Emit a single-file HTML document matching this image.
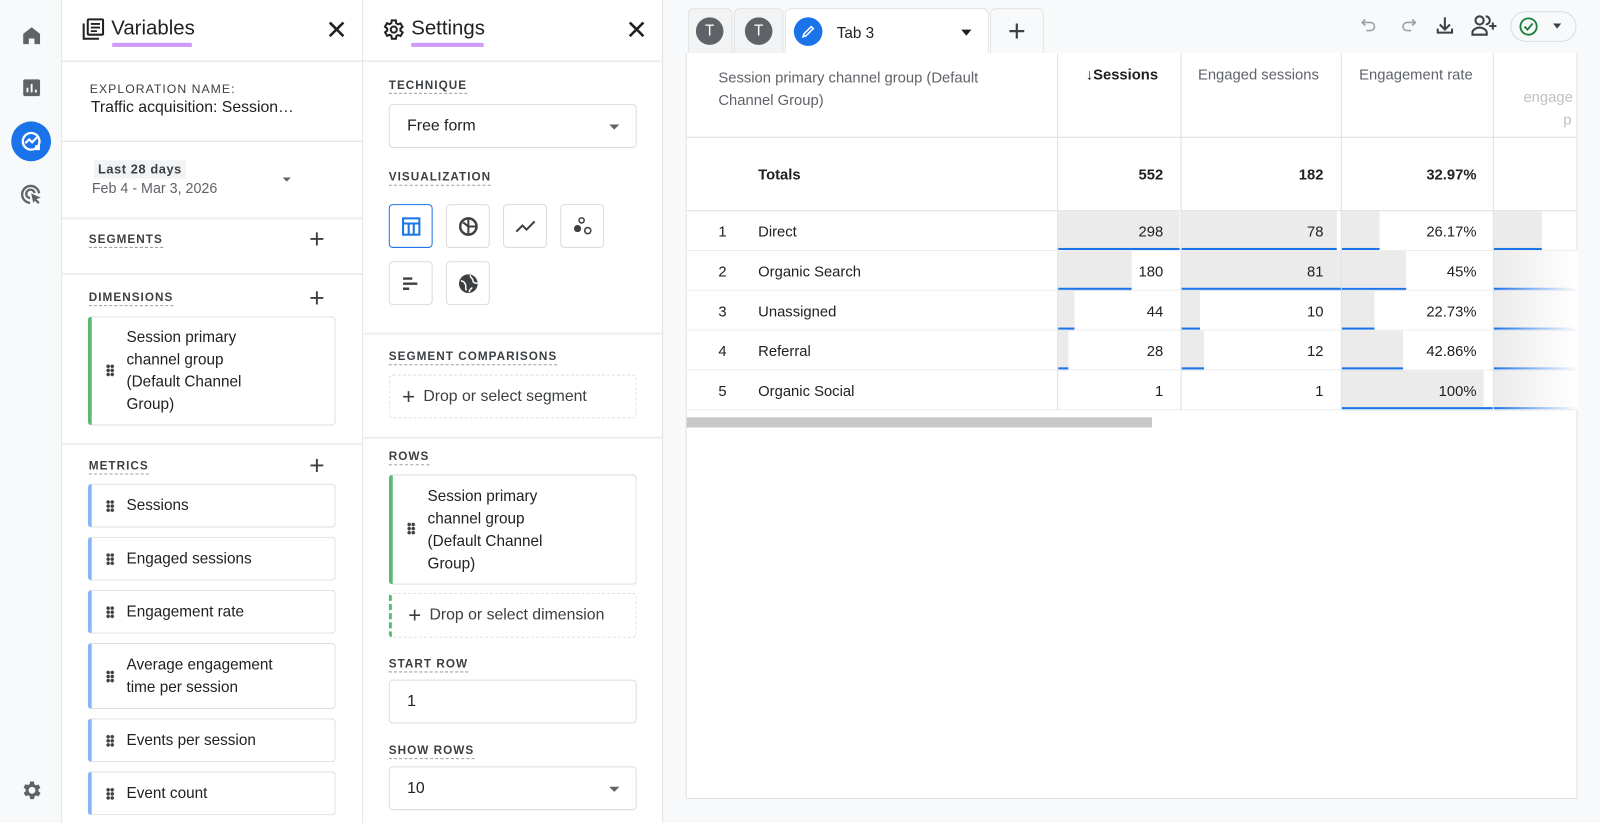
<!DOCTYPE html>
<html><head><meta charset="utf-8">
<style>
*{box-sizing:border-box;margin:0;padding:0}
html,body{width:1600px;height:823px;overflow:hidden;background:#f8f9fa}
body{font-family:"Liberation Sans",Arial,sans-serif;color:#202124;position:relative}
#w{position:absolute;left:0;top:0;width:1568px;height:807px;transform:scale(1.0204);transform-origin:0 0}
.a{position:absolute}
.rail{left:0;top:0;width:61px;height:807px;background:#f8f9fa;border-right:1px solid #e0e0e0}
.panel{background:#fff;top:0;height:807px;border-right:1px solid #e0e0e0}
.hd{font-size:20px;color:#202124}
.ul{height:4px;background:#c58af9;opacity:.85}
.hr{height:2px;background:#eceff1;left:0;right:0}
.lab{font-size:11.5px;letter-spacing:1px;color:#3c4043;border-bottom:1px dashed #9aa0a6;padding-bottom:1px;font-weight:bold}
.plus{font-size:26px;color:#3c4043;font-weight:300;line-height:20px}
.card{border:1px solid #dadce0;border-radius:4px;background:#fff;font-size:15px;color:#202124;line-height:22px}
.card.g{border-left:4px solid #5bb974}
.card.b{border-left:4px solid #8ab4f8}
.dots{position:absolute;left:14px;width:8px;height:12px;background:radial-gradient(circle,#3c4043 1.5px,transparent 2px) 0 0/4px 4px}
.sel{border:1px solid #dadce0;border-radius:4px;font-size:15.5px;padding-left:17px;display:flex;align-items:center}
.tri{position:absolute;right:16px;top:50%;margin-top:-2px;border:5px solid transparent;border-top:5px solid #5f6368;border-bottom:0}
.viz{width:43px;height:43px;border:1px solid #dadce0;border-radius:4px;display:flex;align-items:center;justify-content:center}
.dash{border:1px dashed #dadce0;border-radius:4px;font-size:15.5px;color:#3c4043;display:flex;align-items:center}
.td{font-size:14.5px;color:#202124}
.num{text-align:right}
.vl{width:1px;background:#e0e0e0}
.bar{background:#ebebeb}
.bl{height:3px;background:#1a73e8}
</style></head><body><div id="w">
<!-- rail -->
<div class="a rail">
<svg class="a" style="left:20px;top:24px" width="22" height="22" viewBox="0 0 24 24"><path d="M12 3L3 10v11h6v-6h6v6h6V10z" fill="#5f6368"/></svg>
<svg class="a" style="left:20px;top:75px" width="22" height="22" viewBox="0 0 24 24"><rect x="3" y="3" width="18" height="18" rx="2" fill="#5f6368"/><path d="M7.5 17v-5M12 17V8M16.5 17v-3" stroke="#fff" stroke-width="2"/></svg>
<div class="a" style="left:11px;top:119px;width:39px;height:39px;border-radius:50%;background:#1a73e8"></div>
<svg class="a" style="left:19px;top:127px" width="23" height="23" viewBox="0 0 24 24"><circle cx="12" cy="12" r="8.5" fill="none" stroke="#fff" stroke-width="2.4"/><path d="M6 14l4-4 3 3 5-5" fill="none" stroke="#fff" stroke-width="2.2"/><rect x="16" y="16" width="5" height="5" fill="#fff"/></svg>
<svg class="a" style="left:18px;top:178px" width="25" height="25" viewBox="0 0 24 24"><path d="M11 20a8 8 0 1 1 8.5-9" fill="none" stroke="#5f6368" stroke-width="2.2"/><path d="M11 15.5a4 4 0 1 1 4.3-4.8" fill="none" stroke="#5f6368" stroke-width="2.2"/><path d="M12 11l9 4-4 1.5 3 3-1.5 1.5-3-3L14 20z" fill="#5f6368"/></svg>
<svg class="a" style="left:19px;top:763px" width="23" height="23" viewBox="0 0 24 24"><path fill="#5f6368" d="M19.4 13c0-.3.1-.6.1-1s0-.7-.1-1l2.1-1.6-2-3.5-2.5 1a7 7 0 0 0-1.7-1L14.9 3h-4l-.4 2.7a7 7 0 0 0-1.7 1l-2.5-1-2 3.5L6.5 11c0 .3-.1.6-.1 1s0 .7.1 1l-2.1 1.6 2 3.5 2.5-1c.5.4 1.1.7 1.7 1l.4 2.9h4l.4-2.7c.6-.3 1.2-.6 1.700-1l2.5 1 2-3.5zM12.9 15.5a3.5 3.5 0 1 1 0-7 3.5 3.5 0 0 1 0 7z"/></svg>
</div>
<!-- variables -->
<div class="a panel" style="left:61px;width:295px">
<svg class="a" style="left:18px;top:17px" width="24" height="24" viewBox="0 0 24 24"><path d="M3 6v15h15" fill="none" stroke="#202124" stroke-width="2"/><rect x="7" y="2" width="15" height="15" rx="1" fill="none" stroke="#202124" stroke-width="2"/><path d="M10 6.5h9M10 10h9M10 13.5h6" stroke="#202124" stroke-width="1.8"/></svg>
<div class="a hd" style="left:48px;top:17px">Variables</div>
<div class="a ul" style="left:49px;top:42px;width:78px"></div>
<div class="a" style="left:258px;top:14px;font-size:26px;color:#202124;font-weight:300">✕</div>
<div class="a hr" style="top:59px"></div>
<div class="a" style="left:27px;top:80px;font-size:12px;letter-spacing:1px;color:#3c4043">EXPLORATION NAME:</div>
<div class="a" style="left:28px;top:97px;font-size:15.5px">Traffic acquisition: Session…</div>
<div class="a hr" style="top:138px;height:1px;background:#e0e0e0"></div>
<div class="a" style="left:31px;top:157px;background:#f1f3f4;font-size:12.5px;letter-spacing:.6px;padding:2px 4px;font-weight:bold;color:#3c4043">Last 28 days</div>
<div class="a" style="left:29px;top:176px;font-size:14px;color:#5f6368">Feb 4 - Mar 3, 2026</div>
<div class="a" style="left:216px;top:174px;border:4px solid transparent;border-top:4px solid #5f6368"></div>
<div class="a hr" style="top:213px"></div>
<div class="a lab" style="left:26px;top:229px">SEGMENTS</div><div class="a plus" style="left:242px;top:224px">+</div>
<div class="a hr" style="top:268px;height:1px;background:#e0e0e0"></div>
<div class="a lab" style="left:26px;top:286px">DIMENSIONS</div><div class="a plus" style="left:242px;top:282px">+</div>
<div class="a card g" style="left:25px;top:310px;width:243px;height:107px"><div class="dots" style="top:46px"></div><div style="padding:9px 0 0 34px">Session primary<br>channel group<br>(Default Channel<br>Group)</div></div>
<div class="a hr" style="top:434px"></div>
<div class="a lab" style="left:26px;top:451px">METRICS</div><div class="a plus" style="left:242px;top:446px">+</div>
<div class="a card b" style="left:25px;top:474px;width:243px;height:43px"><div class="dots" style="top:15px"></div><div style="padding:10px 0 0 34px">Sessions</div></div>
<div class="a card b" style="left:25px;top:526px;width:243px;height:43px"><div class="dots" style="top:15px"></div><div style="padding:10px 0 0 34px">Engaged sessions</div></div>
<div class="a card b" style="left:25px;top:578px;width:243px;height:43px"><div class="dots" style="top:15px"></div><div style="padding:10px 0 0 34px">Engagement rate</div></div>
<div class="a card b" style="left:25px;top:630px;width:243px;height:65px"><div class="dots" style="top:26px"></div><div style="padding:10px 0 0 34px">Average engagement<br>time per session</div></div>
<div class="a card b" style="left:25px;top:704px;width:243px;height:43px"><div class="dots" style="top:15px"></div><div style="padding:10px 0 0 34px">Events per session</div></div>
<div class="a card b" style="left:25px;top:756px;width:243px;height:43px"><div class="dots" style="top:15px"></div><div style="padding:10px 0 0 34px">Event count</div></div>
</div>
<!-- settings -->
<div class="a panel" style="left:356px;width:294px">
<svg class="a" style="left:17px;top:17px" width="24" height="24" viewBox="0 0 24 24"><path fill="none" stroke="#202124" stroke-width="2" d="M19.4 13c0-.3.1-.6.1-1s0-.7-.1-1l2.1-1.6-2-3.5-2.5 1a7 7 0 0 0-1.7-1L14.9 3h-4l-.4 2.7a7 7 0 0 0-1.7 1l-2.5-1-2 3.5L6.5 11c0 .3-.1.6-.1 1s0 .7.1 1l-2.1 1.6 2 3.5 2.5-1c.5.4 1.1.7 1.7 1l.4 2.9h4l.4-2.7c.6-.3 1.2-.6 1.7-1l2.5 1 2-3.5z"/><circle cx="12.9" cy="12" r="3" fill="none" stroke="#202124" stroke-width="2"/></svg>
<div class="a hd" style="left:47px;top:17px">Settings</div>
<div class="a ul" style="left:47px;top:42px;width:71px"></div>
<div class="a" style="left:257px;top:14px;font-size:26px;color:#202124;font-weight:300">✕</div>
<div class="a hr" style="top:59px"></div>
<div class="a lab" style="left:25px;top:78px">TECHNIQUE</div>
<div class="a sel" style="left:25px;top:102px;width:243px;height:43px">Free form<div class="tri"></div></div>
<div class="a lab" style="left:25px;top:168px">VISUALIZATION</div>
<div class="a viz" style="left:25px;top:200px;border-color:#1a73e8"><svg width="20" height="20" viewBox="0 0 20 20"><rect x="2" y="2" width="16" height="16" fill="none" stroke="#1a73e8" stroke-width="2"/><path d="M2 7h16M7.5 7v11M12.5 7v11" stroke="#1a73e8" stroke-width="2"/></svg></div>
<div class="a viz" style="left:81px;top:200px"><svg width="22" height="22" viewBox="0 0 22 22"><circle cx="11" cy="11" r="8" fill="none" stroke="#3c4043" stroke-width="2.4"/><path d="M11 3v16M11 11h8M6 7l5 4" stroke="#3c4043" stroke-width="2"/></svg></div>
<div class="a viz" style="left:137px;top:200px"><svg width="22" height="22" viewBox="0 0 22 22"><path d="M2 16l6-6 4 4 8-8" fill="none" stroke="#3c4043" stroke-width="2"/></svg></div>
<div class="a viz" style="left:193px;top:200px"><svg width="22" height="22" viewBox="0 0 22 22"><circle cx="10" cy="5" r="2.5" fill="none" stroke="#3c4043" stroke-width="1.5"/><circle cx="6" cy="13" r="3.5" fill="#3c4043"/><circle cx="16" cy="15" r="3" fill="none" stroke="#3c4043" stroke-width="1.5"/></svg></div>
<div class="a viz" style="left:25px;top:256px"><svg width="22" height="22" viewBox="0 0 22 22"><path d="M3 6h9M3 11h14M3 16h6" stroke="#3c4043" stroke-width="2.4"/></svg></div>
<div class="a viz" style="left:81px;top:256px"><svg width="22" height="22" viewBox="0 0 24 24"><circle cx="12" cy="12" r="10" fill="#3c4043"/><path d="M4 9c3 0 4 2 5 4s-1 4 1 6M14 3c0 3 3 3 3 6s4 2 5 3M13 21c0-3 2-3 3-5" fill="none" stroke="#fff" stroke-width="1.6"/></svg></div>
<div class="a hr" style="top:326px"></div>
<div class="a lab" style="left:25px;top:344px">SEGMENT COMPARISONS</div>
<div class="a dash" style="left:25px;top:367px;width:243px;height:43px;padding-left:12px"><span style="font-size:22px;font-weight:300;margin-right:8px">+</span>Drop or select segment</div>
<div class="a hr" style="top:428px"></div>
<div class="a lab" style="left:25px;top:442px">ROWS</div>
<div class="a card g" style="left:25px;top:465px;width:243px;height:108px"><div class="dots" style="top:46px"></div><div style="padding:10px 0 0 34px">Session primary<br>channel group<br>(Default Channel<br>Group)</div></div>
<div class="a dash" style="left:25px;top:581px;width:243px;height:44px;padding-left:16px;border-left:3px dashed #5bb974"><span style="font-size:22px;font-weight:300;margin-right:8px">+</span>Drop or select dimension</div>
<div class="a lab" style="left:25px;top:645px">START ROW</div>
<div class="a sel" style="left:25px;top:666px;width:243px;height:43px">1</div>
<div class="a lab" style="left:25px;top:730px">SHOW ROWS</div>
<div class="a sel" style="left:25px;top:751px;width:243px;height:43px">10<div class="tri"></div></div>
</div>
<!-- tabs -->
<div class="a" style="left:674px;top:8px;width:44px;height:45px;background:#f1f3f4;border:1px solid #e0e0e0;border-bottom:0;border-radius:6px 6px 0 0"></div>
<div class="a" style="left:682px;top:17px;width:27px;height:27px;border-radius:50%;background:#5f6368;color:#fff;font-size:15px;text-align:center;line-height:27px">T</div>
<div class="a" style="left:719px;top:8px;width:49px;height:45px;background:#f1f3f4;border:1px solid #e0e0e0;border-bottom:0;border-radius:6px 6px 0 0"></div>
<div class="a" style="left:730px;top:17px;width:27px;height:27px;border-radius:50%;background:#5f6368;color:#fff;font-size:15px;text-align:center;line-height:27px">T</div>
<div class="a" style="left:769px;top:8px;width:200px;height:46px;background:#fff;border:1px solid #e0e0e0;border-bottom:0;border-radius:6px 6px 0 0"></div>
<div class="a" style="left:778px;top:17px;width:28px;height:28px;border-radius:50%;background:#1a73e8"></div>
<svg class="a" style="left:784px;top:23px" width="16" height="16" viewBox="0 0 16 16"><path d="M3 13l1-3 7-7 2 2-7 7z" fill="none" stroke="#fff" stroke-width="1.5"/></svg>
<div class="a" style="left:820px;top:24px;font-size:15px">Tab 3</div>
<div class="a" style="left:942px;top:29px;border:5px solid transparent;border-top:6px solid #202124;border-bottom:0"></div>
<div class="a" style="left:970px;top:8px;width:53px;height:45px;background:#f8f9fa;border:1px solid #e0e0e0;border-bottom:0;border-radius:6px 6px 0 0;font-size:30px;font-weight:300;text-align:center;line-height:44px;color:#3c4043">+</div>
<!-- toolbar -->
<svg class="a" style="left:1332px;top:15px" width="20" height="20" viewBox="0 0 20 20"><path d="M6 4L3 7l3 3M3 7h8a4 4 0 0 1 0 8H7" fill="none" stroke="#9aa0a6" stroke-width="1.6"/></svg>
<svg class="a" style="left:1370px;top:15px" width="20" height="20" viewBox="0 0 20 20"><path d="M14 4l3 3-3 3M17 7H9a4 4 0 0 0 0 8h4" fill="none" stroke="#9aa0a6" stroke-width="1.6"/></svg>
<svg class="a" style="left:1406px;top:15px" width="20" height="20" viewBox="0 0 20 20"><path d="M10 2v11M5 9l5 5 5-5M3 13v4h14v-4" fill="none" stroke="#3c4043" stroke-width="2"/></svg>
<svg class="a" style="left:1441px;top:14px" width="28" height="22" viewBox="0 0 28 22"><circle cx="9" cy="6" r="4" fill="none" stroke="#3c4043" stroke-width="2"/><path d="M2 20v-2c0-3 4-5 7-5s7 2 7 5v2z" fill="none" stroke="#3c4043" stroke-width="2"/><path d="M15 2a4 4 0 0 1 0 8M22 8v7M18.5 11.5h7" fill="none" stroke="#3c4043" stroke-width="2"/></svg>
<div class="a" style="left:1480px;top:11px;width:65px;height:30px;border:1px solid #dadce0;border-radius:15px;background:#f8f9fa"></div>
<svg class="a" style="left:1488px;top:16px" width="20" height="20" viewBox="0 0 20 20"><circle cx="10" cy="10" r="8" fill="none" stroke="#188038" stroke-width="1.8"/><path d="M6 10l3 3 5-6" fill="none" stroke="#188038" stroke-width="1.8"/></svg>
<div class="a" style="left:1522px;top:23px;border:4px solid transparent;border-top:5px solid #3c4043;border-bottom:0"></div>
<!-- table card -->
<div class="a" style="left:672px;top:52px;width:874px;height:731px;background:#fff;border:1px solid #e0e0e0;border-top:0"></div>
<div class="a td" style="left:704px;top:66px;color:#5f6368;line-height:22px">Session primary channel group (Default<br>Channel Group)</div>
<div class="a td" style="left:1064px;top:66px;font-weight:bold">↓Sessions</div>
<div class="a td" style="left:1174px;top:66px;color:#5f6368">Engaged sessions</div>
<div class="a td" style="left:1332px;top:66px;color:#5f6368">Engagement rate</div>
<div class="a td" style="left:1493px;top:88px;color:#c0c0c0">engage</div>
<div class="a td" style="left:1532px;top:110px;color:#c0c0c0">p</div>
<div class="a" style="left:672px;top:134px;width:874px;height:1px;background:#e0e0e0"></div>
<div class="a td" style="left:743px;top:164px;font-weight:bold">Totals</div>
<div class="a td" style="left:1040px;width:100px;top:164px;text-align:right;font-weight:bold">552</div>
<div class="a td" style="left:1160px;width:137px;top:164px;text-align:right;font-weight:bold">182</div>
<div class="a td" style="left:1317px;width:130px;top:164px;text-align:right;font-weight:bold">32.97%</div>
<div class="a" style="left:672px;top:206px;width:874px;height:1px;background:#e0e0e0"></div>
<!-- bars -->
<div class="a bar" style="left:1037px;top:207px;width:119px;height:36px"></div><div class="a bl" style="left:1037px;top:243px;width:119px"></div>
<div class="a bar" style="left:1158px;top:207px;width:152px;height:36px"></div><div class="a bl" style="left:1158px;top:243px;width:152px"></div>
<div class="a bar" style="left:1315px;top:207px;width:37px;height:36px"></div><div class="a bl" style="left:1315px;top:243px;width:37px"></div>
<div class="a bar" style="left:1464px;top:207px;width:47px;height:36px"></div><div class="a bl" style="left:1464px;top:243px;width:47px"></div>
<div class="a bar" style="left:1037px;top:246px;width:72px;height:36px"></div><div class="a bl" style="left:1037px;top:282px;width:72px"></div>
<div class="a bar" style="left:1158px;top:246px;width:157px;height:36px"></div><div class="a bl" style="left:1158px;top:282px;width:220px"></div>
<div class="a bar" style="left:1315px;top:246px;width:63px;height:36px"></div>
<div class="a bar" style="left:1037px;top:285px;width:16px;height:36px"></div><div class="a bl" style="left:1037px;top:321px;width:16px"></div>
<div class="a bar" style="left:1158px;top:285px;width:18px;height:36px"></div><div class="a bl" style="left:1158px;top:321px;width:18px"></div>
<div class="a bar" style="left:1315px;top:285px;width:32px;height:36px"></div><div class="a bl" style="left:1315px;top:321px;width:32px"></div>
<div class="a bar" style="left:1037px;top:324px;width:10px;height:36px"></div><div class="a bl" style="left:1037px;top:360px;width:10px"></div>
<div class="a bar" style="left:1158px;top:324px;width:22px;height:36px"></div><div class="a bl" style="left:1158px;top:360px;width:22px"></div>
<div class="a bar" style="left:1315px;top:324px;width:60px;height:36px"></div><div class="a bl" style="left:1315px;top:360px;width:60px"></div>
<div class="a bar" style="left:1315px;top:363px;width:139px;height:36px"></div><div class="a bl" style="left:1315px;top:399px;width:148px"></div>
<div class="a" style="left:1464px;top:246px;width:82px;height:156px;background:linear-gradient(90deg,#ebebeb,#fff)"></div>
<div class="a bl" style="left:1464px;top:282px;width:82px;background:linear-gradient(90deg,#1a73e8,#fff)"></div>
<div class="a bl" style="left:1464px;top:321px;width:82px;background:linear-gradient(90deg,#1a73e8,#fff)"></div>
<div class="a bl" style="left:1464px;top:360px;width:82px;background:linear-gradient(90deg,#1a73e8,#fff)"></div>
<div class="a bl" style="left:1464px;top:399px;width:82px;background:linear-gradient(90deg,#1a73e8,#fff)"></div>
<!-- grid lines -->
<div class="a" style="left:672px;top:245px;width:874px;height:1px;background:#eee"></div>
<div class="a" style="left:672px;top:284px;width:874px;height:1px;background:#eee"></div>
<div class="a" style="left:672px;top:323px;width:874px;height:1px;background:#eee"></div>
<div class="a" style="left:672px;top:362px;width:874px;height:1px;background:#eee"></div>
<div class="a" style="left:672px;top:401px;width:874px;height:1px;background:#eee"></div>
<div class="a vl" style="left:1036px;top:52px;height:350px"></div>
<div class="a vl" style="left:1157px;top:52px;height:350px"></div>
<div class="a vl" style="left:1314px;top:52px;height:350px"></div>
<div class="a vl" style="left:1463px;top:52px;height:350px"></div>
<!-- rows text -->
<div class="a td" style="left:704px;top:220px">1</div><div class="a td" style="left:743px;top:220px">Direct</div>
<div class="a td num" style="left:1040px;width:100px;top:220px">298</div><div class="a td num" style="left:1160px;width:137px;top:220px">78</div><div class="a td num" style="left:1317px;width:130px;top:220px">26.17%</div>
<div class="a td" style="left:704px;top:259px">2</div><div class="a td" style="left:743px;top:259px">Organic Search</div>
<div class="a td num" style="left:1040px;width:100px;top:259px">180</div><div class="a td num" style="left:1160px;width:137px;top:259px">81</div><div class="a td num" style="left:1317px;width:130px;top:259px">45%</div>
<div class="a td" style="left:704px;top:298px">3</div><div class="a td" style="left:743px;top:298px">Unassigned</div>
<div class="a td num" style="left:1040px;width:100px;top:298px">44</div><div class="a td num" style="left:1160px;width:137px;top:298px">10</div><div class="a td num" style="left:1317px;width:130px;top:298px">22.73%</div>
<div class="a td" style="left:704px;top:337px">4</div><div class="a td" style="left:743px;top:337px">Referral</div>
<div class="a td num" style="left:1040px;width:100px;top:337px">28</div><div class="a td num" style="left:1160px;width:137px;top:337px">12</div><div class="a td num" style="left:1317px;width:130px;top:337px">42.86%</div>
<div class="a td" style="left:704px;top:376px">5</div><div class="a td" style="left:743px;top:376px">Organic Social</div>
<div class="a td num" style="left:1040px;width:100px;top:376px">1</div><div class="a td num" style="left:1160px;width:137px;top:376px">1</div><div class="a td num" style="left:1317px;width:130px;top:376px">100%</div>
<div class="a" style="left:673px;top:409px;width:456px;height:10px;background:#c8c8c8"></div>
</div></body></html>
